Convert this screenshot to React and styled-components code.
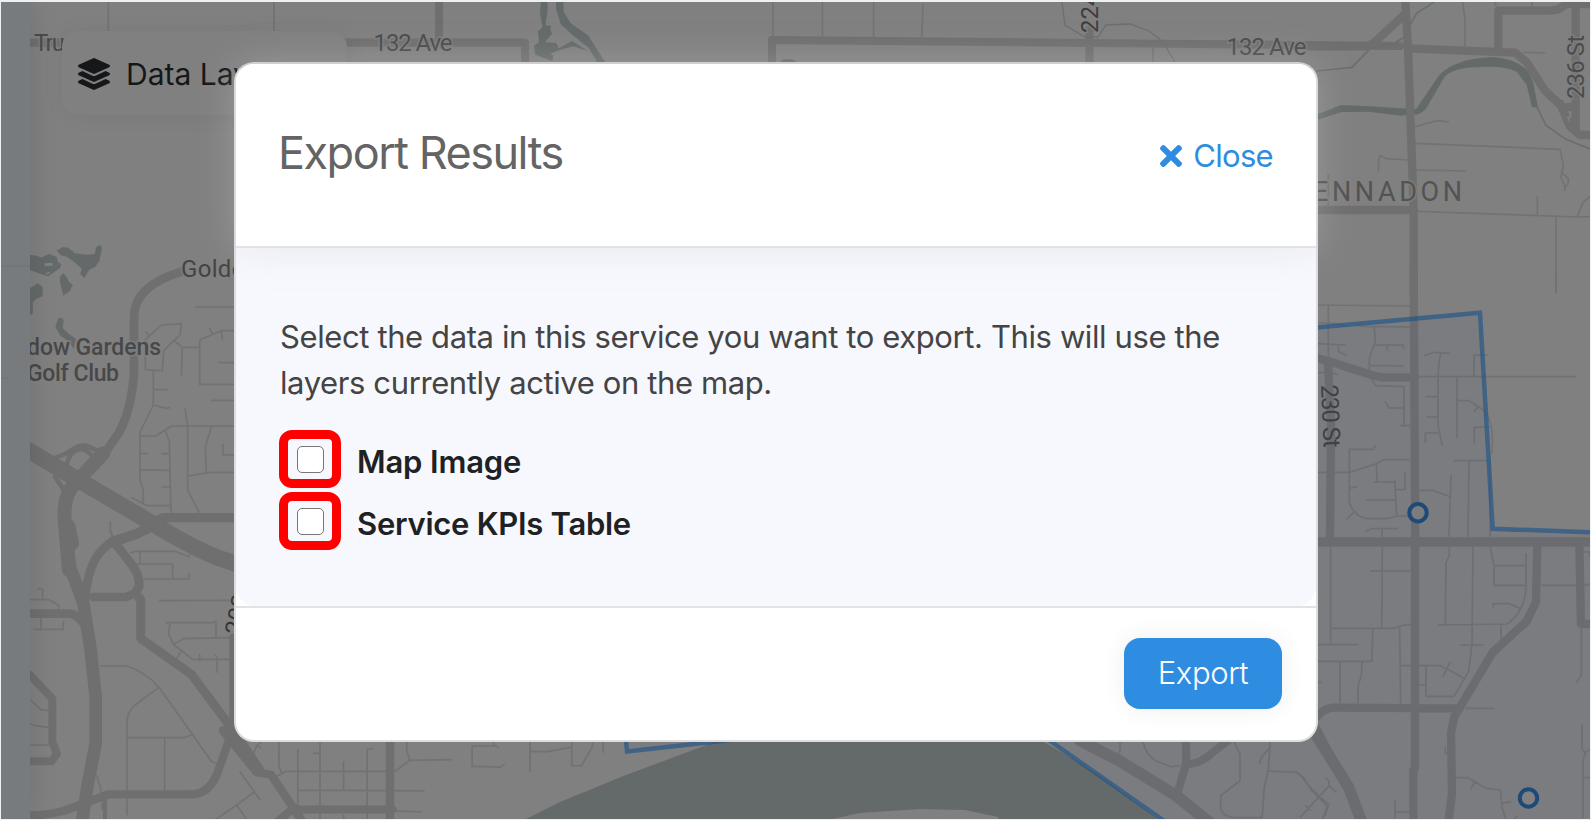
import React from "react";
import styled, { createGlobalStyle } from "styled-components";
import { FaLayerGroup, FaTimes } from "react-icons/fa";

const GlobalStyle = createGlobalStyle`
  *, *::before, *::after { box-sizing: border-box; }
  body {
    margin: 0;
    background: #eef1f3;
    font-family: Inter, "Liberation Sans", sans-serif;
  }
`;

const Page = styled.div`
  position: relative;
  width: 1591px;
  height: 820px;
  padding: 2px 1px 1px;
  overflow: hidden;
`;

const Viewport = styled.main`
  display: flex;
  width: 1589px;
  height: 817px;
  background: #808080;
  overflow: hidden;
`;

const MapCanvas = styled.svg`
  position: absolute;
  left: 1px;
  top: 2px;
`;

const Sidebar = styled.aside`
  position: relative;
  flex: 0 0 29px;
  background: #787b7e;
  box-shadow: 0 0 28px rgba(0, 0, 0, 0.13);

  &::before, &::after {
    content: "";
    display: block;
    height: 2px;
    background: #737678;
  }
  &::before { margin-top: 263px; }
  &::after { width: 8px; margin-top: 110px; }
`;

const LayersPanel = styled.button`
  position: relative;
  display: flex;
  align-items: center;
  gap: 16px;
  width: 285px;
  height: 84px;
  margin: 29px 0 0 32px;
  padding: 2px 0 0 16px;
  border: 0;
  border-radius: 16px;
  background: #808080;
  box-shadow: 0 0 22px rgba(0, 0, 0, 0.06);
  color: #151719;
  font: 400 30px/36px Inter, sans-serif;
  white-space: nowrap;

  svg { width: 32px; height: 32px; }
`;

const Backdrop = styled.div`
  position: absolute;
  inset: 0;
  display: flex;
  align-items: flex-start;
  padding: 62px 0 0 234px;
`;

const Dialog = styled.section`
  display: flex;
  flex-direction: column;
  width: 1084px;
  height: 680px;
  border: 2px solid #dcdddf;
  border-top-color: #d0d0d0;
  border-radius: 20px;
  background: #fff;
`;

const DialogHeader = styled.header`
  position: relative;
  display: flex;
  flex: 0 0 184px;
  align-items: center;
  justify-content: space-between;
  padding: 0 43px 2px 42px;
  border-bottom: 2px solid #e1e2e4;
  border-radius: 18px 18px 0 0;
  background: #fff;
  box-shadow: 0 0 38px rgba(205, 206, 210, 0.36);
`;

const Title = styled.h1`
  margin: -2px 0 0;
  color: #646464;
  font-size: 45px;
  font-weight: 400;
  line-height: 56px;
  letter-spacing: -1.5px;
`;

const CloseButton = styled.button`
  display: flex;
  align-items: center;
  gap: 11px;
  margin-top: 3px;
  padding: 0;
  border: 0;
  background: none;
  color: #2e8de1;
  font: 400 31px/40px Inter, sans-serif;
  letter-spacing: -0.7px;

  svg { width: 22px; height: 32px; }
`;

const DialogBody = styled.div`
  flex: 0 0 358px;
  padding: 66px 43px 0;
  border-radius: 0 0 20px 20px;
  background: #f7f8fd;
`;

const Description = styled.p`
  margin: 0 0 0 1px;
  color: #444;
  font-size: 31px;
  line-height: 46px;
  letter-spacing: -0.39px;
  white-space: nowrap;
`;

const Options = styled.div`
  display: flex;
  flex-direction: column;
  gap: 4px;
  margin-top: 24px;
`;

const Option = styled.label`
  display: flex;
  align-items: center;
  gap: 16px;
  height: 58px;
  color: #202122;
  font-size: 31px;
  font-weight: 600;
  line-height: 40px;

  > span:last-child { padding-top: 5px; letter-spacing: ${(p) => p.$tracking}px; }
`;

const Highlight = styled.span`
  display: flex;
  align-items: center;
  justify-content: center;
  width: 62px;
  height: 58px;
  border: 9px solid #fe0000;
  border-radius: 13px;
`;

const Checkbox = styled.input`
  appearance: none;
  width: 27px;
  height: 27px;
  margin: 0 0 0 1px;
  border: 1.5px solid #777;
  border-radius: 5px;
  background: #fff;
`;

const DialogFooter = styled.footer`
  display: flex;
  flex: 1;
  align-items: flex-start;
  justify-content: flex-end;
  padding: 30px 34px 0;
  border-top: 2px solid #e1e2e4;
`;

const ExportButton = styled.button`
  width: 158px;
  height: 71px;
  padding: 0 0 2px;
  border: 0;
  border-radius: 16px;
  background: #2e8de1;
  box-shadow: 0 0 24px rgba(0, 0, 0, 0.07);
  color: #fff;
  font: 300 31px/40px Inter, sans-serif;
  letter-spacing: -0.4px;
`;

const Street = styled.path`
  fill: none;
  stroke: #727272;
  stroke-width: ${(p) => p.$w || 5};
  stroke-linejoin: round;
`;

const Road = styled.path`
  fill: none;
  stroke: #6f6f6f;
  stroke-width: ${(p) => p.$w || 26};
  stroke-linejoin: round;
  stroke-linecap: round;
`;

const Water = styled.path`
  fill: #646a69;
`;

const Creek = styled.path`
  fill: none;
  stroke: #68706e;
  stroke-width: ${(p) => p.$w || 5};
`;

const MapLabel = styled.text`
  fill: ${(p) => p.$fill || "#4b4b4b"};
  stroke: #808080;
  stroke-width: 3px;
  stroke-opacity: ${(p) => (p.$bare ? 0 : 0.8)};
  paint-order: stroke;
  font-family: Roboto, sans-serif;
  font-size: ${(p) => p.$size || 24}px;
  font-weight: ${(p) => p.$weight || 400};
`;

const third = "scale(.33333)";

function NorthWest() {
  return (
    <g transform={third}>
      <Street d="M325 0V110M822 0V110" />
      <Road $w="25" d="M80 128H1567" />
      <Water d="M170 752L188 741L205 743L225 760L258 764L284 762L288 742L300 734L306 744L298 783L286 800L268 809L253 834L241 822L245 806L222 785L200 770L182 766Z" />
      <Water d="M90 764L113 768L124 773L146 762L170 770L174 786L184 792L180 804L158 819L145 829L122 822L90 810Z" />
      <path d="M134 790L158 788L158 797L134 799M136 819L153 815L142 824" fill="#808080" />
      <Water d="M180 830L190 819L201 833L208 847L219 855L209 874L190 887L180 847ZM90 864L114 850L128 861V889L107 898L98 908L99 938L90 946Z" />
    </g>
  );
}

function West() {
  return (
    <g transform={`translate(0 250) ${third}`}>
      <Water d="M166 230L174 205L185 203L191 211L188 234L208 253L228 266L221 298L209 276L181 257Z" />
      <Street d="M585 171H705M436 245L448 256L438 268M438 268L484 225L544 221L541 253L522 272L491 302L487 362L436 359V268M522 272L547 292H599M547 292L544 377M628 233L637 250M599 270L663 242H705M663 242L668 271M599 268V403H705M655 338H705M633 451H705M460 361V465L420 547V690L430 720V758M460 419H503M460 465L500 475L511 472M420 558H466L515 528H705M495 540L508 575L513 790M420 611H443M484 611H508M422 659L509 661M484 711H511M394 742L441 767H512M555 475L563 527V721L598 788M635 528L616 590L619 670M563 678L632 667H705M669 582V614L705 616M331 813V840L339 862" />
      <Road $w="26" d="M545 65Q400 108 402 205V370Q394 480 356 550L310 615L236 695" />
      <Road $w="42" d="M310 610L235 690Q185 730 195 820L207 960M205 828L216 880" />
      <Road $w="14" d="M170 622Q195 614 213 601Q250 575 278 596L310 608M198 655C205 608 230 590 257 600L280 620M165 680L195 725" />
      <Road $w="49" d="M70 592L230 687L440 810Q600 908 680 932L720 946" />
      <Road $w="28" d="M460 820L490 803H705M450 825L410 853L330 880" />
    </g>
  );
}

function SouthWest() {
  return (
    <g transform={`translate(0 530) ${third}`}>
      <Street d="M329 0L342 30M392 70L405 64H526L567 80L571 66M420 65V102M410 102H518V147M430 147H567V129M477 212L705 211M112 175L128 178V208M90 209H147L176 226V240M123 260V298M100 298H190V273M498 275L510 285L505 310L521 344L578 388H690M508 278H640L650 272M648 278V323M521 344L550 326L690 323M543 365L528 388M599 372V394M645 373L651 383V428M300 408H378Q435 424 477 472L634 694L647 700M477 472L405 525Q381 547 381 575V856M381 623H552L575 615M494 626V786M90 508L123 539L145 541M90 580L101 586L145 592M90 645H148M290 735L302 778L307 840M719 724L763 786L780 810M763 786L710 825L645 870M710 825L740 868" />
      <Road $w="38" d="M196 -10L210 110L250 220L272 360L287 500V640L262 770L244 890" />
      <Road $w="26" d="M255 210C265 90 300 60 340 32L440 0" />
      <Road $w="27" d="M342 35L400 110Q420 140 417 170L405 190L422 208V325L575 434L695 595L780 720" />
      <Road d="M280 201H378L405 190M90 251H210Q240 254 265 305" />
      <Road $w="24" d="M90 435L157 506V635L171 672L154 694H90" />
      <Road $w="25" d="M696 605L652 730Q625 795 570 793H325L190 843Q130 858 80 856" />
      <Road $w="18" d="M697 320V600" />
      <Road $w="12" d="M315 790V868" />
    </g>
  );
}

function North() {
  return (
    <>
      <Road $w="8" d="M439 0V43M772 62V40L1090 43L1400 46" />
      <Road $w="8" d="M521 43H525V64M1089.5 30V64" />
      <Street $w="1.6" d="M773 2V39M822.5 2V39M873.6 2V39M923 4L921.7 39M1153 48V62" />
      <Creek $w="1.3" d="M1062 2L1065 25L1085 37L1098 37L1106 25L1130 24L1149 31L1163 42L1175 62" />
      <g transform={third}>
        <g transform="translate(1500 0)">
          <Water d="M123 0H143V35L137 65L139 78L152 75V91L156 101L135 126L169 129L176 145L216 123L263 153L220 139L176 151L151 161L160 167L157 183L106 164L102 137L117 126L114 94L128 80L120 43ZM168 0H190L191 35L212 70L264 106L316 187H292L267 145L218 106L182 72L168 25ZM840 187L850 178L875 178L893 187Z" />
        </g>
      </g>
    </>
  );
}

function NorthEast() {
  return (
    <g transform={`translate(1300 0) ${third}`}>
      <Creek d="M402 6L350 40L328 78M315 110L277 133L216 140L156 202L50 213M708 315L738 376L795 416L875 449" />
      <Street d="M488 0L495 65V145M583 0L589 20M696 0V28M670 157L736 159M345 380L412 362L447 366M345 430L780 448L790 495L783 533L795 560V574M785 518L805 535L804 553L795 560M324 480L260 476L241 466L236 480L235 515M345 510L497 513M85 522V617M350 634L832 651L875 650M712 588V649M768 651V880M832 650L849 607L875 585" />
      <Water d="M45 346L124 315L206 319L348 328L418 225Q465 176 575 171Q650 176 684 214L699 245L714 322H696L680 255L650 215Q610 196 530 202Q457 204 433 232L379 325Q357 348 343 342L303 347L205 335L125 336L45 362Z" />
      <Road $w="25" d="M315 -10L324 145L341 630V880M25 139H200L220 130L312 45M324 145L645 158L680 187L735 272L790 323L820 320M827 10V390M595 145V32H750L775 28L800 12H875M780 310L810 380L840 405H875" />
      <path d="M809 347V370L800 351Z" fill="#808080" />
      <Road $w="25" d="M50 630H340" />
    </g>
  );
}

function East() {
  return (
    <g transform={`translate(1300 270) ${third}`}>
      <Street d="M50 105L331 108M85 105V260M50 159L105 160L136 168M178 169L331 171M223 170L226 214L208 264V305M223 225H310V238M262 226V242M50 221L137 225M115 225V244L141 258M50 308H98L114 315M208 286L313 288M215 328L228 347L312 350V467M300 467H331M255 394L268 414H311M373 257L402 247L451 251M423 249Q413 285 414 350V465L427 528M377 380H414M379 441H414M376 518V489H416M471 323V505M471 392H507L555 423Q585 465 575 552M522 425L535 410M569 471L523 472V521M566 255H522V320M355 320H829M768 0V70M460 572H567M507 572L504 800M570 570V800M453 615L447 800M360 661H397L453 681M331 569H252L227 582L148 607H50M229 580L231 635M220 636H283M315 605V659H286M284 628L290 738M199 690H285M148 655L172 650M228 525L219 538H148V698Q165 744 205 746H262L290 738H325M160 728L139 749M196 784L215 776H294M246 777V810" />
      <Road $w="25" d="M341 0L346 835" />
      <Road $w="25" d="M50 264L84 273L215 315L245 322H345M84 280L93 460L90 800M50 814H875" />
    </g>
  );
}

function SouthEast() {
  return (
    <g transform={`translate(1300 540) ${third}`}>
      <Street d="M92 10V312M247 10L245 265M210 93H331M92 265H282L317 254H333M218 265L216 364H50M50 314H174M120 365V490M186 365L184 405L174 440V490M55 427H66M299 264L302 490M300 377H422L491 414M451 365L428 411M378 378V469H462L506 394L516 315L519 10M355 435H378M448 10V47L438 68L436 254M413 255L621 252Q675 215 678 140V39M480 315H550M569 10L582 77V136M582 77H678M580 136H677M725 136H828M580 203V191H628L662 206M602 253L604 298M497 505H583M844 265V405L828 430M846 553V628L856 638L875 625M856 638L849 664V835M849 713H875M466 713H503L558 745L602 750L606 802L617 836M524 727L512 746M606 790L634 784M436 619V639L445 641M285 781V835M285 816H330M850 134H875M853 36H869V52M0 704L35 747L86 794L75 827M88 737L0 832M77 713L86 724L88 737L109 758M16 796L32 811M652 828L640 840" />
      <Road $w="25" d="M50 8H875M712 10L708 185L680 244L578 337L463 530L453 580L456 760L446 840M345 -10V685M340 690V850M838 10L843 252H875M50 530Q75 503 100 503L480 505" />
      <Road $w="34" d="M45 580L145 740L187 850" />
    </g>
  );
}

function South() {
  return (
    <>
      <Water d="M500 832L560 802L626 775L720 740L770 720H1010L1044 742L1080 763L1108 782L1150 813L1165 826H1000L998 817L965 810L920 809L860 813L828 820V826Z" />
      <g transform="translate(230 600) scale(.35714 .3348)">
        <Street d="M90 420L75 435L63 465M75 435L88 442M137 420V500L146 517M125 530L155 512H440M190 445V615M252 420V660M232 458H252M318 482V567M318 640V660M402 445H384V660M190 568L545 570M458 630L537 633M462 512L503 479L622 477M495 420V450L503 479M738 420V436M753 443L747 436H678V497L757 499L769 490M840 420V513M840 453H889L957 439M957 420V495H984L1015 438V420M1045 420V456" />
        <Road $w="24" d="M-20 390L75 515L115 522L205 665M185 626H455M448 420V670M180 620L135 660" />
      </g>
      <g transform="translate(780 600) scale(.35714 .3348)">
        <Street d="M952 420V450L945 465M1015 420Q1025 465 1055 482L1094 498L1120 495M1270 420L1288 460V540L1234 584V623Q1240 648 1275 650H1350L1356 560L1367 510L1373 420M1373 440L1350 467L1342 490M1367 511L1447 515L1465 530L1490 570L1533 615L1519 657" />
        <Road $w="34" d="M840 420L950 480L1110 585L1215 675" />
        <Road $w="23" d="M1137 420V490L1112 580M1137 490Q1180 490 1210 456L1255 420M1500 380L1590 565" />
      </g>
    </>
  );
}

function ServiceArea() {
  const points =
    "1300,329 1480,312.7 1492.7,528.7 1600,532.5 1600,830 1177,830 1053,743 960,680 720,740 627,751.5 624,700 1200,500";
  return (
    <>
      <polygon points={points} fill="rgba(60, 80, 130, 0.08)" />
      <path
        d="M1300 329L1480 312.7L1492.7 528.7L1600 532.5M1177 830L1053 743L1000 705M730 740L627 751.5L624 720"
        fill="none"
        stroke="rgba(28, 83, 137, .63)"
        strokeWidth="4.5"
      />
      <circle cx="1418" cy="512.7" r="8.7" fill="#7a7c80" stroke="#1d4a78" strokeWidth="4" />
      <circle cx="1528.5" cy="798" r="8.7" fill="#808080" stroke="#1d4a78" strokeWidth="4" />
    </>
  );
}

function Labels() {
  return (
    <>
      <MapLabel x="34" y="51" textLength="31">Tru</MapLabel>
      <MapLabel x="373.5" y="51" textLength="79">132 Ave</MapLabel>
      <MapLabel x="1226.5" y="54.5" textLength="80">132 Ave</MapLabel>
      <MapLabel transform="translate(1098 33) rotate(-90)" $fill="#3c3c3c">224</MapLabel>
      <MapLabel transform="translate(1583.5 99) rotate(-90)" textLength="64">236 St</MapLabel>
      <MapLabel transform="translate(1321 385) rotate(87.5)" textLength="63" $fill="#3f4143" $bare>230 St</MapLabel>
      <MapLabel transform="translate(241 636) rotate(-78)" $fill="#363636">202 St</MapLabel>
      <MapLabel x="181" y="277" textLength="77" $fill="#444">Golden</MapLabel>
      <MapLabel x="27" y="354.5" textLength="134" $size="23" $weight="500" $fill="#484848">dow Gardens</MapLabel>
      <MapLabel x="27" y="380.5" textLength="92" $size="23" $weight="500" $fill="#484848">Golf Club</MapLabel>
      <MapLabel x="1313" y="201" textLength="149" $size="27" $fill="#535353">ENNADON</MapLabel>
    </>
  );
}

function StreetMap() {
  return (
    <MapCanvas width="1589" height="817" viewBox="1 2 1589 817" aria-label="Map">
      <NorthWest />
      <West />
      <SouthWest />
      <North />
      <NorthEast />
      <East />
      <SouthEast />
      <South />
      <ServiceArea />
      <Labels />
    </MapCanvas>
  );
}

const exportOptions = [
  { label: "Map Image", tracking: -0.15 },
  { label: "Service KPIs Table", tracking: -0.27 },
];

export default function App() {
  return (
    <>
      <GlobalStyle />
      <Page>
        <Viewport>
          <StreetMap />
          <Sidebar />
          <LayersPanel>
            <FaLayerGroup />
            Data Layers
          </LayersPanel>
        </Viewport>
        <Backdrop>
          <Dialog role="dialog" aria-label="Export Results">
            <DialogHeader>
              <Title>Export Results</Title>
              <CloseButton>
                <FaTimes />
                Close
              </CloseButton>
            </DialogHeader>
            <DialogBody>
              <Description>
                Select the data in this service you want to export. This will use the
                <br />
                layers currently active on the map.
              </Description>
              <Options>
                {exportOptions.map(({ label, tracking }) => (
                  <Option key={label} $tracking={tracking}>
                    <Highlight>
                      <Checkbox type="checkbox" />
                    </Highlight>
                    <span>{label}</span>
                  </Option>
                ))}
              </Options>
            </DialogBody>
            <DialogFooter>
              <ExportButton>Export</ExportButton>
            </DialogFooter>
          </Dialog>
        </Backdrop>
      </Page>
    </>
  );
}
